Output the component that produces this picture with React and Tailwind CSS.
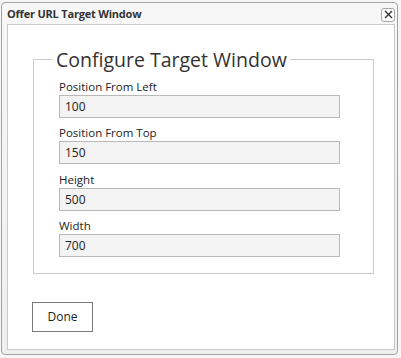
import React from "react";

const fields = [
  { label: "Position From Left", value: "100" },
  { label: "Position From Top", value: "150" },
  { label: "Height", value: "500" },
  { label: "Width", value: "700" },
];

const App = () => {
  return (
    <div className="w-[401px] h-[358px] overflow-hidden bg-[#f6f6f6] relative" style={{ fontFamily: '"Open Sans", "Noto Sans", sans-serif' }}>
      {/* Dialog */}
      <div className="ml-[1px] mt-[2px] w-[397px] h-[353px] border border-[#a3a3a3] rounded-[4px] bg-gradient-to-b from-[#f7f7f7] to-[#efefef] flex flex-col">
        {/* Title bar */}
        <div className="h-[21px] flex items-center justify-between pl-[5px] pr-[2px]">
          <span className="text-[11px] font-bold text-[#333] leading-none tracking-[-0.2px]">Offer URL Target Window</span>
          <button className="w-[14px] h-[14px] mt-[2px] border border-[#a8a8a8] rounded-[3px] bg-white flex items-center justify-center">
            <svg width="9" height="9" viewBox="0 0 9 9">
              <path d="M1 1 L8 8 M8 1 L1 8" stroke="#333" strokeWidth="1.4" />
            </svg>
          </button>
        </div>

        {/* Content */}
        <div className="ml-[5px] mr-[2px] h-[326px] border border-[#c9c9c9] bg-white pt-[21px] pl-[25px]">
          <fieldset className="w-[341px] border border-[#cccccc] pb-[16px]">
            <legend className="ml-[19px] px-[3px] text-[19.5px] leading-[27px] text-[#333]">Configure Target Window</legend>
            <div className="flex flex-col gap-[5px] pt-[4px] pl-[25px]">
              {fields.map(({ label, value }, i) => (
                <div key={label} className={`flex flex-col ${i === 2 ? "mt-[1px]" : ""}`}>
                  <label className="pt-[2px] text-[11.5px] leading-[16px] text-[#222]">{label}</label>
                  <div className="w-[281px] h-[23px] border border-[#b8b8b8] bg-[#f3f3f3] flex items-center px-[5px] text-[12px] text-[#222]">
                    {value}
                  </div>
                </div>
              ))}
            </div>
          </fieldset>

          <button className="mt-[28px] -ml-[1px] w-[61px] h-[30px] border border-[#7a7a7a] bg-white text-[12px] text-[#222]">Done</button>
        </div>
      </div>
    </div>
  );
};

export default App;
